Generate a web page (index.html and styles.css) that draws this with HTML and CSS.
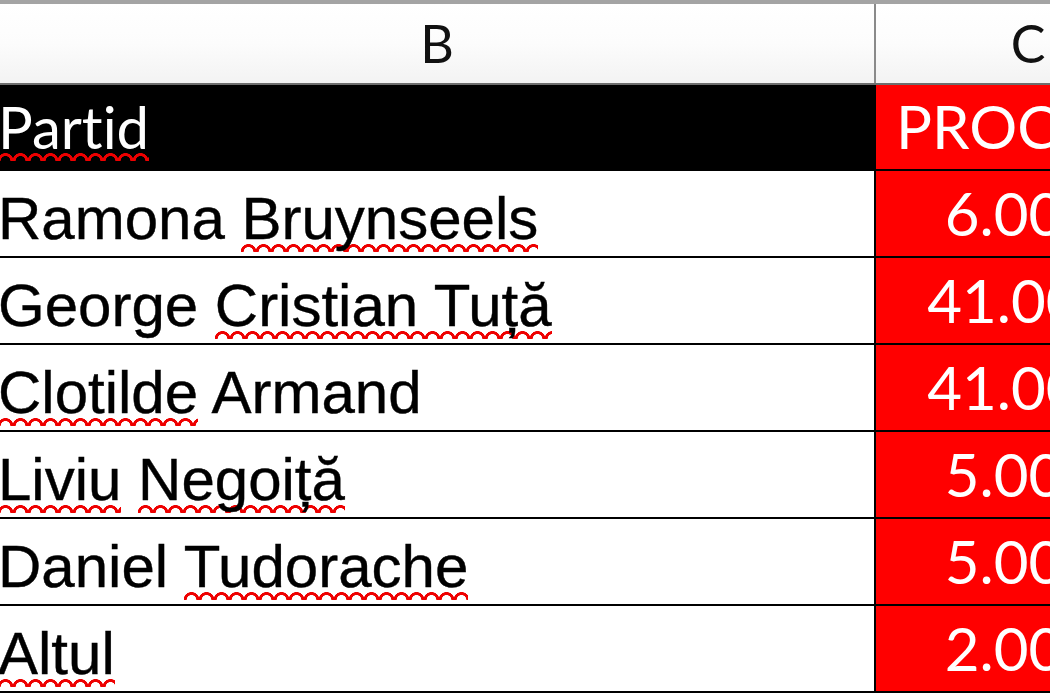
FILE: index.html
```html
<!DOCTYPE html>
<html lang="ro">
<head>
<meta charset="utf-8">
<title>Sondaj</title>
<link rel="stylesheet" href="styles.css">
</head>
<body>
<div class="sheet">
  <div class="row head">
    <div class="cell colb"><span class="v">B</span></div>
    <div class="cell colc"><span class="v">C</span></div>
  </div>
  <div class="row title">
    <div class="cell colb"><span class="v"><span class="sp">Partid</span></span></div>
    <div class="cell colc"><span class="v">PROCENT</span></div>
  </div>
  <div class="row data">
    <div class="cell colb"><span class="v">Ramona <span class="sp">Bruynseels</span></span></div>
    <div class="cell colc"><span class="v">6.00%</span></div>
  </div>
  <div class="row data">
    <div class="cell colb"><span class="v">George <span class="sp">Cristian Tuță</span></span></div>
    <div class="cell colc"><span class="v">41.00%</span></div>
  </div>
  <div class="row data">
    <div class="cell colb"><span class="v"><span class="sp">Clotilde</span> Armand</span></div>
    <div class="cell colc"><span class="v">41.00%</span></div>
  </div>
  <div class="row data">
    <div class="cell colb"><span class="v"><span class="sp">Liviu</span> <span class="sp">Negoiță</span></span></div>
    <div class="cell colc"><span class="v">5.00%</span></div>
  </div>
  <div class="row data">
    <div class="cell colb"><span class="v">Daniel <span class="sp">Tudorache</span></span></div>
    <div class="cell colc"><span class="v">5.00%</span></div>
  </div>
  <div class="row data">
    <div class="cell colb"><span class="v"><span class="sp">Altul</span></span></div>
    <div class="cell colc"><span class="v">2.00%</span></div>
  </div>
</div>
</body>
</html>
```

FILE: styles.css
```css
html, body {
  margin: 0;
  padding: 0;
}

body {
  width: 1050px;
  height: 700px;
  overflow: hidden;
  background: #ffffff;
}

.sheet {
  display: flex;
  flex-direction: column;
  width: 1180px;
}

.row {
  display: grid;
  grid-template-columns: 876px 304px;
}

.cell {
  display: flex;
  align-items: flex-end;
  box-sizing: border-box;
  white-space: nowrap;
  font-variant-ligatures: none;
}

.v {
  display: block;
  white-space: pre;
}

.colb {
  border-right: 2px solid #000;
}

/* column header row */
.head {
  height: 85px;
  box-sizing: border-box;
  border-top: 4px solid #a4a4a4;
  border-bottom: 2px solid #6e6e6e;
  background: linear-gradient(#ffffff 0%, #fcfcfc 50%, #f3f3f3 100%);
}

.head .cell {
  justify-content: center;
  font-family: Lato, "Open Sans", sans-serif;
  font-size: 52px;
  line-height: 1;
  color: #111;
  padding-bottom: 14px;
}

.head .colb {
  border-right-color: #8a8a8a;
}

/* title row */
.title {
  height: 86px;
  box-sizing: border-box;
  border-bottom: 2px solid #000;
}

.title .cell {
  font-family: Lato, "Open Sans", sans-serif;
  font-size: 58px;
  line-height: 1;
  color: #ffffff;
  padding-bottom: 13px;
}

.title .colb {
  background: #000;
  padding-left: 0;
}

.title .colb .v {
  margin-left: -2px;
}

.title .colc {
  background: #ff0000;
  padding-left: 20px;
  font-size: 60px;
}

/* data rows */
.data {
  height: 87px;
  box-sizing: border-box;
  border-bottom: 2px solid #000;
}

.data .colb {
  font-family: "Liberation Sans", Arial, sans-serif;
  font-size: 60px;
  line-height: 1;
  color: #000;
  padding-bottom: 7px;
  -webkit-text-stroke: 0.4px #000;
}

.data .colb .v {
  margin-left: -2px;
}

.data .colc {
  background: #ff0000;
  justify-content: center;
  font-family: Lato, "Open Sans", sans-serif;
  font-size: 60px;
  line-height: 1;
  color: #ffffff;
  padding-bottom: 13px;
}

/* spell-check squiggle */
.sp {
  background-image: radial-gradient(circle at 50% 100%, transparent 0, transparent 4.6px, #ee0000 5.2px, #ee0000 7.6px, transparent 8.2px);
  background-size: 15px 9px;
  background-repeat: repeat-x;
  background-position: 0 100%;
}
```
